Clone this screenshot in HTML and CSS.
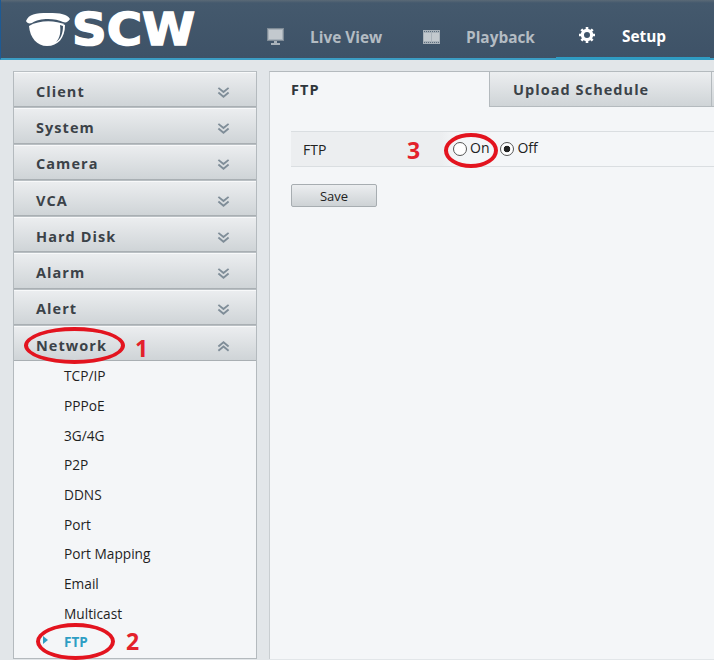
FILE: index.html
```html
<!DOCTYPE html>
<html lang="en">
<head>
    <meta charset="UTF-8">
    <title>SCW Setup</title>
    <link rel="stylesheet" href="styles.css">
</head>
<body>
    <div class="header">
        <div class="logo">
            <svg class="dome" width="46" height="36" viewBox="0 0 46 36">
                <path d="M1 9 C4 2 10 1 23 1 C36 1 42 2 45 7 C43 10 41 11 38 10 C30 6 14 6 7 11 C4 12 2 11 1 9 Z" fill="#fff"/>
                <path d="M4 14 C14 8 31 8 40 13 C40 26 33 34 22 34 C12 34 5 26 4 14 Z" fill="#fff"/>
                <path d="M31 30 C35 26 36 20 35 13 L38 14 C38 21 36 27 31 30 Z" fill="#3f5468"/>
            </svg>
            <span class="logo-text">SCW</span>
        </div>
        <div class="nav">
            <div class="nav-item live">
                <svg width="17" height="17" viewBox="0 0 17 17">
                    <rect x="0.5" y="0.5" width="16" height="12" fill="#a9b2ba" stroke="#7f8b96"/>
                    <rect x="2" y="2" width="13" height="9" fill="#c3c9ce"/>
                    <rect x="7" y="13" width="3" height="2" fill="#a9b2ba"/>
                    <rect x="4" y="15" width="9" height="2" fill="#a9b2ba"/>
                </svg>
                <span>Live View</span>
            </div>
            <div class="nav-item playback">
                <svg width="17" height="14" viewBox="0 0 17 14">
                    <rect width="17" height="14" fill="#a9b2ba"/>
                    <rect x="1" y="3" width="7" height="8" fill="#c3c9ce"/>
                    <rect x="9" y="3" width="7" height="8" fill="#c3c9ce"/>
                    <path d="M1 1.5 H16 M1 12.5 H16" stroke="#5d6e7d" stroke-dasharray="1 1"/>
                </svg>
                <span>Playback</span>
            </div>
            <div class="nav-item setup">
                <svg width="16" height="16" viewBox="0 0 16 16">
                    <circle cx="8" cy="8" r="4.6" fill="none" stroke="#fff" stroke-width="3.2"/>
                    <path d="M8 0 V16 M0 8 H16 M2.3 2.3 L13.7 13.7 M13.7 2.3 L2.3 13.7" stroke="#fff" stroke-width="2.6" stroke-dasharray="3 10 3"/>
                </svg>
                <span>Setup</span>
            </div>
        </div>
    </div>

    <div class="main">
        <div class="sidebar">
            <div class="menu-head"><span>Client</span><svg class="chev" width="13" height="13" viewBox="0 0 14 13"><path d="M1.5 1.5 L7 6 L12.5 1.5 M1.5 6.5 L7 11 L12.5 6.5"/></svg></div>
            <div class="menu-head"><span>System</span><svg class="chev" width="13" height="13" viewBox="0 0 14 13"><path d="M1.5 1.5 L7 6 L12.5 1.5 M1.5 6.5 L7 11 L12.5 6.5"/></svg></div>
            <div class="menu-head"><span>Camera</span><svg class="chev" width="13" height="13" viewBox="0 0 14 13"><path d="M1.5 1.5 L7 6 L12.5 1.5 M1.5 6.5 L7 11 L12.5 6.5"/></svg></div>
            <div class="menu-head"><span>VCA</span><svg class="chev" width="13" height="13" viewBox="0 0 14 13"><path d="M1.5 1.5 L7 6 L12.5 1.5 M1.5 6.5 L7 11 L12.5 6.5"/></svg></div>
            <div class="menu-head"><span>Hard Disk</span><svg class="chev" width="13" height="13" viewBox="0 0 14 13"><path d="M1.5 1.5 L7 6 L12.5 1.5 M1.5 6.5 L7 11 L12.5 6.5"/></svg></div>
            <div class="menu-head"><span>Alarm</span><svg class="chev" width="13" height="13" viewBox="0 0 14 13"><path d="M1.5 1.5 L7 6 L12.5 1.5 M1.5 6.5 L7 11 L12.5 6.5"/></svg></div>
            <div class="menu-head"><span>Alert</span><svg class="chev" width="13" height="13" viewBox="0 0 14 13"><path d="M1.5 1.5 L7 6 L12.5 1.5 M1.5 6.5 L7 11 L12.5 6.5"/></svg></div>
            <div class="menu-head"><span>Network</span><svg class="chev" width="13" height="13" viewBox="0 0 14 13"><path d="M1.5 6.5 L7 2 L12.5 6.5 M1.5 11 L7 6.5 L12.5 11"/></svg></div>
            <div class="submenu">
                <div class="sub-item">TCP/IP</div>
                <div class="sub-item">PPPoE</div>
                <div class="sub-item">3G/4G</div>
                <div class="sub-item">P2P</div>
                <div class="sub-item">DDNS</div>
                <div class="sub-item">Port</div>
                <div class="sub-item">Port Mapping</div>
                <div class="sub-item">Email</div>
                <div class="sub-item">Multicast</div>
                <div class="sub-item active">FTP</div>
            </div>
        </div>

        <div class="content">
            <div class="tabs">
                <div class="tab active">FTP</div>
                <div class="tab">Upload Schedule</div>
                <div class="tab rest"></div>
            </div>
            <div class="panel">
                <div class="form-row">
                    <div class="form-label">FTP</div>
                    <div class="form-value">
                        <label class="radio"><span class="dot"></span>On</label>
                        <label class="radio"><span class="dot checked"></span>Off</label>
                    </div>
                </div>
                <button class="save">Save</button>
            </div>
        </div>
    </div>

    <!-- red annotations drawn on top of the screenshot -->
    <div class="ring ring-network"></div>
    <div class="ring ring-ftp"></div>
    <div class="ring ring-on"></div>
    <div class="mark mark-1">1</div>
    <div class="mark mark-2">2</div>
    <div class="mark mark-3">3</div>
</body>
</html>
```

FILE: styles.css
```css
html, body {
    height: 100%;
}
body {
    margin: 0;
    width: 714px;
    height: 660px;
    overflow: hidden;
    position: relative;
    background-color: #e2e6e9;
    font-family: "Open Sans", "Noto Sans", sans-serif;
}
.header {
    height: 58px;
    display: flex;
    background: linear-gradient(#5a6976 0, #44596d 3px, #3e5267 100%);
    border-left: 1px solid #1d5a94;
    border-bottom: 2px solid #3b9dc4;
}
.logo {
    width: 266px;
    display: flex;
    align-items: flex-start;
    padding-top: 12px;
    padding-left: 24px;
    box-sizing: border-box;
}
.dome {
    flex: none;
}
.logo-text {
    font-family: "DejaVu Sans", sans-serif;
    font-weight: bold;
    font-size: 45px;
    line-height: 36px;
    color: #fff;
    letter-spacing: 0;
    margin-left: 1px;
    -webkit-text-stroke: 1.5px #fff;
    transform-origin: left center;
    transform: scaleX(1.07);
}
.nav {
    flex: 1;
    display: flex;
    align-items: stretch;
    font-size: 15.4px;
    font-weight: bold;
    color: #b4bcc3;
}
.nav-item {
    display: flex;
    align-items: center;
    height: 58px;
    padding-top: 15px;
    box-sizing: border-box;
}
.nav-item span {
    position: relative;
    top: 1px;
}
.nav-item svg {
    flex: none;
}
.live {
    width: 156px;
}
.live span {
    margin-left: 26px;
}
.playback {
    width: 133px;
}
.playback span {
    margin-left: 26px;
}
.setup {
    color: #fff;
    width: 154px;
    padding-left: 23px;
    height: 60px;
    padding-top: 13px;
    border-bottom: 3px solid #2f9cc3;
}
.setup span {
    margin-left: 27px;
}
.main {
    display: flex;
    align-items: flex-start;
    padding: 11px 0 0 13px;
}
.sidebar {
    width: 244px;
    flex: none;
    height: 588px;
    box-sizing: border-box;
    border: 1px solid #b4babe;
    border-top: 0;
    background-color: #f4f6f8;
}
.menu-head {
    height: 36.3px;
    box-sizing: border-box;
    display: flex;
    justify-content: space-between;
    align-items: center;
    padding: 4px 26px 0 22px;
    background: linear-gradient(#eceef0, #cfd4d7);
    border-top: 1px solid #b9bfc3;
    border-bottom: 1px solid #a9afb3;
    box-shadow: inset 0 1px 0 #f8f9fa;
    font-size: 14.5px;
    font-weight: bold;
    letter-spacing: 1.05px;
    color: #3b4248;
}
.chev {
    flex: none;
    margin-top: 2px;
}
.chev path {
    fill: none;
    stroke: #7f8d98;
    stroke-width: 2;
}
.submenu {
    padding-top: 0;
}
.sub-item {
    height: 29.65px;
    line-height: 29px;
    padding-left: 50px;
    font-size: 13.7px;
    color: #1f1f1f;
    position: relative;
}
.sub-item.active {
    color: #2e9ec4;
    font-size: 13.5px;
    font-weight: bold;
}
.sub-item.active:before {
    content: "";
    position: absolute;
    left: 29px;
    top: 8px;
    border-left: 5px solid #2e9ec4;
    border-top: 4px solid transparent;
    border-bottom: 4px solid transparent;
}
.content {
    margin-left: 12px;
    flex: 1;
    min-width: 0;
    height: 588px;
    background-color: #f4f6f8;
    border-top: 1px solid #b4babe;
    border-left: 1px solid #c9ced1;
    box-sizing: border-box;
}
.tabs {
    display: flex;
    height: 35px;
}
.tab {
    box-sizing: border-box;
    width: 222px;
    flex: none;
    padding-left: 23px;
    line-height: 35px;
    font-size: 14.5px;
    font-weight: bold;
    letter-spacing: 1.05px;
    color: #3b4248;
    background: linear-gradient(#eceef0, #cfd4d7);
    border-left: 1px solid #b4babe;
    border-bottom: 1px solid #b4babe;
}
.tab.active {
    width: 219px;
    padding-left: 21px;
    background: none;
    border: 0;
    color: #2f363c;
}
.tab.rest {
    width: 10px;
    padding: 0;
}
.panel {
    padding: 24px 0 0 21px;
}
.form-row {
    display: flex;
    height: 36px;
    box-sizing: border-box;
    border-top: 1px solid #dadee1;
    border-bottom: 1px solid #dadee1;
    background: linear-gradient(90deg, #eceef0 150px, #f4f6f8 165px);
    font-size: 14px;
    color: #222;
}
.form-label {
    width: 154px;
    padding-left: 12px;
    box-sizing: border-box;
    line-height: 35px;
}
.form-value {
    display: flex;
    align-items: center;
    gap: 11px;
    padding-bottom: 4px;
    padding-left: 8px;
}
.radio {
    display: flex;
    align-items: center;
    gap: 3px;
}
.dot {
    width: 14px;
    height: 14px;
    box-sizing: border-box;
    border: 1px solid #555;
    border-radius: 50%;
    background-color: #fff;
    display: block;
    margin-top: 3px;
}
.dot.checked {
    background: radial-gradient(circle, #222 3px, #fff 3.6px);
}
.save {
    display: block;
    margin-top: 17px;
    width: 86px;
    height: 23px;
    padding: 0;
    border: 1px solid #a7adb1;
    border-radius: 2px;
    background: linear-gradient(#eceef0, #cdd2d5);
    font-family: inherit;
    font-size: 13px;
    color: #222;
}
.ring {
    position: absolute;
    box-sizing: border-box;
    border: 4px solid #e3141f;
    border-radius: 50%;
}
.ring-network {
    left: 24px;
    top: 327px;
    width: 101px;
    height: 37px;
}
.ring-ftp {
    left: 36px;
    top: 623px;
    width: 79px;
    height: 37px;
}
.ring-on {
    left: 444px;
    top: 133px;
    width: 54px;
    height: 35px;
}
.mark {
    position: absolute;
    font-family: "Open Sans", sans-serif;
    font-weight: bold;
    font-size: 23px;
    line-height: 26px;
    color: #e3212b;
}
.mark-1 {
    left: 135px;
    top: 335px;
}
.mark-2 {
    left: 126px;
    top: 628px;
}
.mark-3 {
    left: 407px;
    top: 137px;
}
```
